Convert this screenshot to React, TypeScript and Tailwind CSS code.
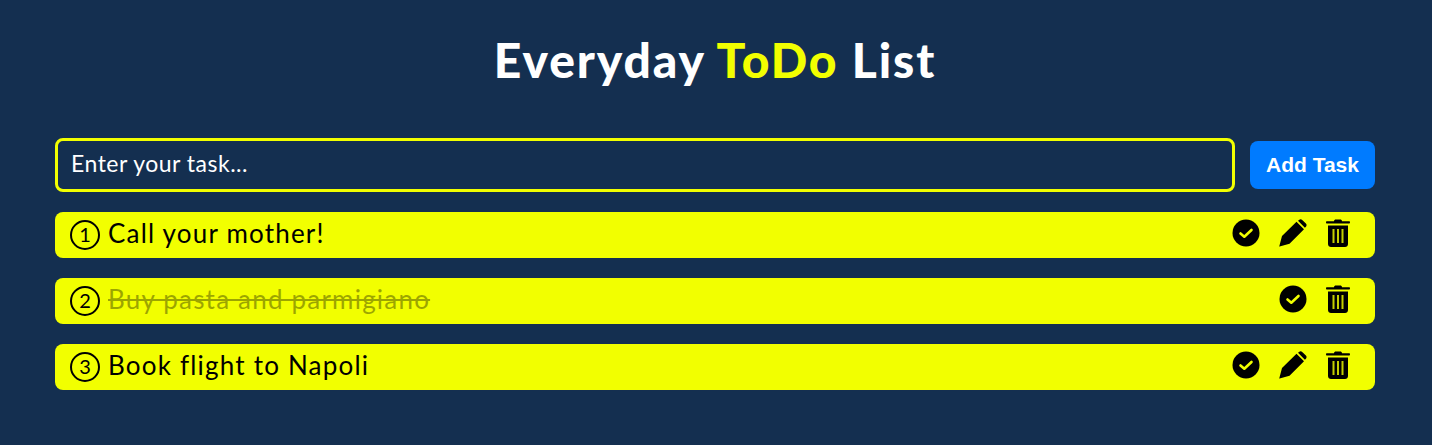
const tasks = [
  { id: 1, num: 1, text: "Call your mother!", done: false },
  { id: 2, num: 2, text: "Buy pasta and parmigiano", done: true },
  { id: 3, num: 3, text: "Book flight to Napoli", done: false },
];

function CheckIcon() {
  return (
    <svg width="28" height="28" viewBox="0 0 28 28" className="shrink-0">
      <circle cx="14" cy="14" r="13.5" fill="#000" />
      <path
        d="M8.5 14.5l3.8 3.2L19.5 11"
        fill="none"
        stroke="#f2ff00"
        strokeWidth="2.6"
        strokeLinecap="round"
        strokeLinejoin="round"
      />
    </svg>
  );
}

function PencilIcon() {
  return (
    <svg width="28" height="28" viewBox="0 0 28 28" className="shrink-0">
      <path d="M3 17L17.500 2.800l7.500 7.500L10.500 24.800 .6 27.600c-.3.1-.4-.1-.3-.4z" fill="#000" />
      <path d="M19 1.800l1-.9c1-.9 2.300-.9 3.200 0l3.700 3.700c.9.9.9 2.200 0 3.200l-1 1z" fill="#000" />
    </svg>
  );
}

function TrashIcon() {
  return (
    <svg width="24" height="28" viewBox="0 0 24 28" className="shrink-0">
      <path d="M8 2.200C8 1 8.800 .4 10 .4h4c1.200 0 2 .6 2 1.800h7c.6 0 1 .4 1 1s-.4 1.400-1 1.400H1c-.6 0-1-.8-1-1.400s.4-1 1-1z" fill="#000" />
      <path d="M2 6.500h20V25c0 1.700-1.300 3-3 3H5c-1.700 0-3-1.300-3-3z" fill="#000" />
      <path d="M6.500 10h2v14h-2zM11 10h2v14h-2zM15.500 10h2v14h-2z" fill="#c4cf00" />
    </svg>
  );
}

export default function App() {
  return (
    <div className="min-h-[445px] bg-[#142f50] pl-[55px] pr-[57px] pt-[30px] font-['Lato',sans-serif]">
      <h1 className="mb-[48px] text-center text-[48px] leading-[60px] font-black tracking-[1.9px] text-white">
        Everyday <span className="text-[#f2ff00]">ToDo</span> List
      </h1>

      <div className="mb-[20px] flex items-center gap-[15px]">
        <div className="flex h-[54px] flex-1 items-center rounded-[8px] border-[3px] border-[#f2ff00] px-[13px] pb-[4px] text-[23px] tracking-[0.5px] text-white">
          Enter your task...
        </div>
        <button className="h-[48px] w-[125px] rounded-[8px] bg-[#007bff] font-['Liberation_Sans',sans-serif] text-[21px] font-bold text-white">
          Add Task
        </button>
      </div>

      <ul className="flex flex-col gap-[20px]">
        {tasks.map((task) => (
          <li
            key={task.id}
            className="flex h-[46px] items-center rounded-[8px] bg-[#f2ff00] pl-[15px] pr-[25px] text-black"
          >
            <span className="mr-[8px] flex h-[30px] w-[30px] items-center justify-center rounded-full border-2 border-black pb-[2px] text-[20px] leading-none">
              {task.num}
            </span>
            <span
              className={
                task.done
                  ? "flex-1 pb-[4px] text-[26px] tracking-[1.2px] line-through opacity-35"
                  : "flex-1 pb-[4px] text-[26px] tracking-[1.2px]"
              }
            >
              {task.text}
            </span>
            <div className="flex items-center gap-[19px] pb-[4px]">
              <CheckIcon />
              {!task.done && <PencilIcon />}
              <TrashIcon />
            </div>
          </li>
        ))}
      </ul>
    </div>
  );
}
